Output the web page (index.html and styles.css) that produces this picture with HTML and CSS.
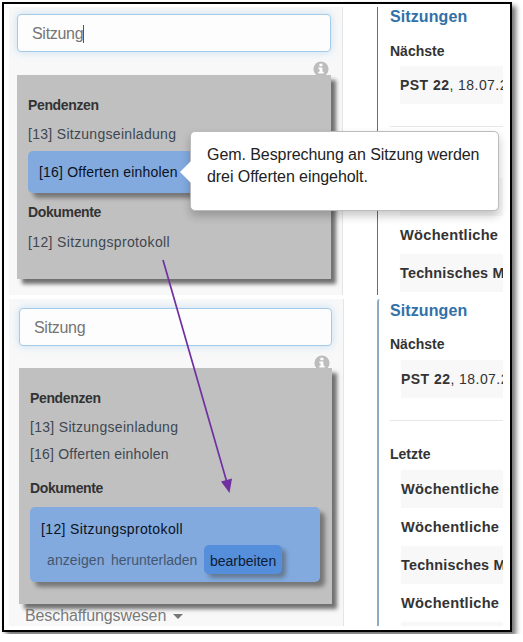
FILE: index.html
```html
<!DOCTYPE html>
<html lang="de">
<head>
<meta charset="utf-8">
<title>Sitzungen</title>
<link rel="stylesheet" href="styles.css">
</head>
<body>
<main class="frame">
  <section class="shot shot-first">
    <aside class="sidebar">
      <div class="search">Sitzung<span class="cursor"></span></div>
      <svg class="info" viewBox="0 0 16 16"><circle cx="8" cy="8" r="7.6" fill="#bdbdbd"/><path d="M6.4 2.8h3v2.4h-3zM5.4 6.6h4v4.2h1.3v1.8H5.3v-1.8h1.3V8.3H5.4z" fill="#fff"/></svg>
      <div class="results">
        <h3>Pendenzen</h3>
        <p class="item item-einladung">[13] Sitzungseinladung</p>
        <div class="active"><p class="item item-offerten">[16] Offerten einholen</p></div>
        <h3 class="second">Dokumente</h3>
        <p class="item item-protokoll">[12] Sitzungsprotokoll</p>
      </div>
    </aside>
    <div class="meetings">
      <h2>Sitzungen</h2>
      <h4>Nächste</h4>
      <div class="row odd"><b class="pst">PST 22</b><span class="date">, 18.07.2</span></div>
      <hr>
      <div class="row odd covered"></div>
      <div class="row"><b class="week">Wöchentliche</b></div>
      <div class="row odd"><b class="tech">Technisches M</b></div>
    </div>
  </section>
  <section class="shot shot-second">
    <aside class="sidebar">
      <div class="search">Sitzung</div>
      <svg class="info" viewBox="0 0 16 16"><circle cx="8" cy="8" r="7.6" fill="#bdbdbd"/><path d="M6.4 2.8h3v2.4h-3zM5.4 6.6h4v4.2h1.3v1.8H5.3v-1.8h1.3V8.3H5.4z" fill="#fff"/></svg>
      <div class="results">
        <h3>Pendenzen</h3>
        <p class="item item-einladung">[13] Sitzungseinladung</p>
        <p class="item item-offerten">[16] Offerten einholen</p>
        <h3 class="second">Dokumente</h3>
        <div class="active">
          <p class="item item-protokoll">[12] Sitzungsprotokoll</p>
          <div class="actions"><span class="show">anzeigen</span><span class="load">herunterladen</span><span class="edit">bearbeiten</span></div>
        </div>
      </div>
      <div class="nav"><span>Beschaffungswesen</span><i class="caret"></i></div>
    </aside>
    <div class="meetings">
      <h2>Sitzungen</h2>
      <h4>Nächste</h4>
      <div class="row odd"><b class="pst">PST 22</b><span class="date">, 18.07.2</span></div>
      <hr>
      <h4>Letzte</h4>
      <div class="row odd"><b class="week">Wöchentliche</b></div>
      <div class="row"><b class="week">Wöchentliche</b></div>
      <div class="row odd"><b class="tech">Technisches M</b></div>
      <div class="row"><b class="week">Wöchentliche</b></div>
      <div class="row odd"></div>
    </div>
  </section>
  <div class="tooltip">Gem. Besprechung an Sitzung werden<br>drei Offerten eingeholt.</div>
  <svg class="arrow" viewBox="0 0 80 240"><path d="M3 2L66.500 223" stroke="#7030a0" stroke-width="1.700" fill="none"/><path d="M61 223.500L72 220.500L69.500 235z" fill="#7030a0"/></svg>
</main>
</body>
</html>
```
FILE: styles.css
```css
* { box-sizing: border-box; }
body { margin: 0; background: #fff; font-family: "Liberation Sans", Arial, sans-serif; font-size: 14px; color: #333; }
h2, h3, h4, p { margin: 0; white-space: nowrap; }
.frame { position: relative; width: 510px; height: 630px; margin: 2px; padding: 3px 7px 4px 5px; border: 2px solid #000; background: #fff; box-shadow: 4px 4px 5px rgba(0,0,0,.55); }
.shot { display: flex; width: 494px; overflow: hidden; }
.shot-first { height: 288px; }
.shot-second { height: 327px; margin-top: 4px; }
.sidebar { flex: none; display: flex; flex-direction: column; width: 334px; padding: 7px 11px 0 8px; background: #f8f8f8; border-right: 1px solid #e5e5e5; }
.shot-second .sidebar { width: 335px; padding: 9px 11px 0 10px; }
.search { flex: none; height: 38px; padding-left: 14px; border: 1px solid #a5cbe8; border-radius: 4px; background: #fdfdfd; box-shadow: 0 0 8px rgba(102,175,233,.35); font-size: 16px; line-height: 37px; color: #757575; letter-spacing: -.3px; }
.cursor { display: inline-block; width: 1px; height: 18px; background: #555; vertical-align: -4px; }
.info { flex: none; width: 16px; height: 16px; margin: 9px 2px -2px auto; }
.results { flex: none; position: relative; height: 204px; padding: 20px 11px 0; background: #c0c0c0; box-shadow: 5px 5px 4px #707070; }
.shot-second .info { margin-bottom: -3px; }
.shot-second .results { height: 236px; padding-right: 12px; }
h3 { font-size: 14px; line-height: 20px; letter-spacing: -.36px; }
.item { line-height: 28px; color: #3e4752; }
.item-einladung { margin-top: 5px; letter-spacing: .3px; }
.item-offerten { letter-spacing: .2px; }
.item-protokoll { letter-spacing: .37px; }
.results > .item-offerten { line-height: 26px; }
.active { border-radius: 5px; background: #82aadf; box-shadow: 5px 5px 4px #777; }
.active .item { color: #0b1220; }
.shot-first .active { height: 42px; margin-top: 3px; padding: 7px 11px; }
.shot-first .second { margin-top: 9px; }
.shot-first .item-protokoll { margin-top: 6px; }
.shot-second .second { margin-top: 11px; }
.shot-second .active { height: 75px; margin-top: 9px; padding: 8px 11px; }
.actions { display: flex; align-items: center; height: 29px; margin-top: 2px; padding-left: 6px; color: #44566f; line-height: 31px; white-space: nowrap; }
.show, .load { padding-top: 2px; }
.show { width: 64px; letter-spacing: .1px; }
.load { width: 93px; }
.edit { width: 78px; height: 29px; padding-left: 6px; border-radius: 5px; background: #558edb; box-shadow: 4px 4px 4px #667a92; color: #0c1c33; line-height: 32px; }
.nav { display: flex; align-items: center; gap: 7px; padding: 1px 0 0 6px; font-size: 16px; line-height: 22px; letter-spacing: -.1px; color: #7a7a7a; }
.caret { border: 5px solid transparent; border-top-color: #777; border-bottom: 0; }
.meetings { flex: none; width: 126px; height: 100%; margin-left: 34px; padding-left: 12px; border-left: 1px solid #3f78ad; overflow: hidden; }
.shot-second .meetings { width: 126px; margin-left: 33px; padding-left: 11px; border-left: 2px solid #8faac5; border-top-left-radius: 3px; }
h2 { height: 20px; font-size: 16px; line-height: 20px; letter-spacing: .1px; color: #3270a8; }
h4 { height: 20px; margin-top: 14px; font-size: 14px; line-height: 20px; }
.row { height: 38px; margin-left: 10px; line-height: 39px; white-space: nowrap; }
.shot-second .row { margin-left: 11px; }
.odd { background: #f8f8f8; }
h4 + .row { margin-top: 5px; }
.pst, .date { letter-spacing: .45px; }
.week { font-size: 14.6px; letter-spacing: .28px; }
.tech { font-size: 14.4px; letter-spacing: .2px; }
hr { height: 1px; margin: 22px 0 0; border: 0; background: #e7e7e7; }
.covered { margin-top: 51px; }
.shot-second h2 { margin-top: 2px; }
.shot-second h4 { margin-top: 13px; }
.shot-second h4 + .row { margin-top: 6px; }
.shot-second hr + h4 { margin-top: 23px; }
.tooltip { position: absolute; left: 186px; top: 127px; width: 309px; height: 80px; padding: 12px 16px; border: 1px solid #bbb; border-radius: 5px; background: #fff; box-shadow: 0 5px 10px rgba(0,0,0,.22); font-size: 16px; line-height: 22px; letter-spacing: -.07px; color: #222; white-space: nowrap; }
.tooltip::before { content: ""; position: absolute; left: -11px; top: 29px; border: 11px solid transparent; border-right-color: #fff; border-left: 0; }
.arrow { position: absolute; left: 156px; top: 254px; width: 80px; height: 240px; }
```
